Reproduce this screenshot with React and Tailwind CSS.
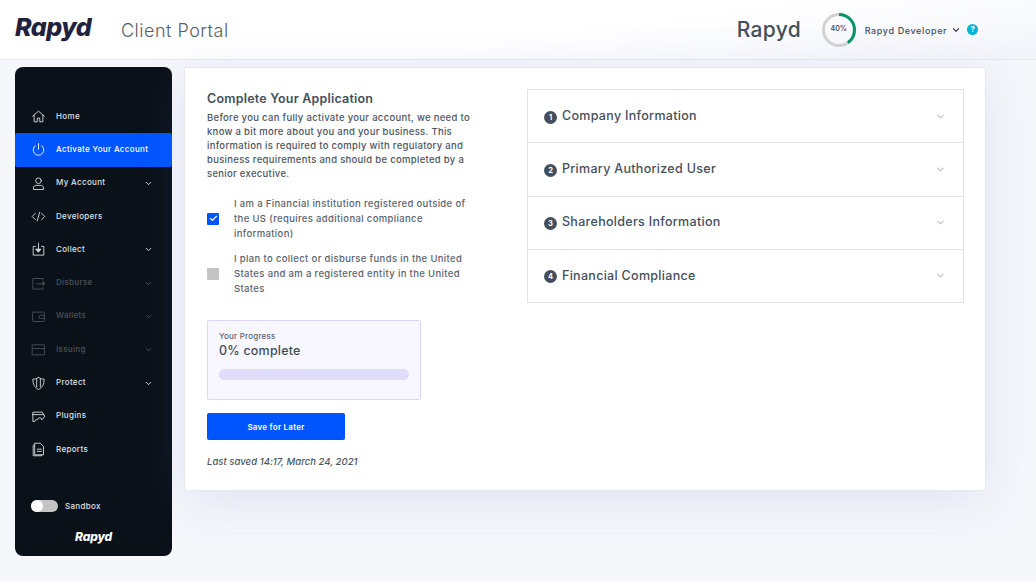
import React from "react";
import { ChevronDown, Check } from "lucide-react";

const S = ({ children, cls = "" }) => (
  <svg viewBox="0 0 24 24" width="15" height="15" fill="none" stroke="currentColor" strokeWidth="1.4" strokeLinecap="round" strokeLinejoin="round" className={cls}>{children}</svg>
);
const icons = {
  home: <S><path d="M2.500 11.500 12 3.500l9.500 8" /><path d="M5 10v10.500h5v-6h4v6h5V10" /></S>,
  power: <S><path d="M12 2.500v9" /><path d="M7 5.800a8.500 8.500 0 1 0 10 0" /></S>,
  user: <S><circle cx="12" cy="7.500" r="4.500" /><path d="M4 21v-2c0-2.500 2-4 4.500-4h7c2.500 0 4.500 1.500 4.500 4v2z" /></S>,
  code: <S><path d="m7 7-5 5 5 5" /><path d="m17 7 5 5-5 5" /><path d="m14 5-4 14" /></S>,
  collect: <S><path d="M7 7H3.500v14h17V7H17" /><path d="M12 2v12" /><path d="M8 11.500h8L12 16z" fill="currentColor" /></S>,
  disburse: <S><path d="M19 7V4H3v17h16v-3" /><path d="M9 12.500h10" /><path d="M19 10v5l3-2.500z" fill="currentColor" /></S>,
  wallet: <S><rect x="2.500" y="5" width="19" height="15" rx="1.500" /><path d="M21.500 10H15a2.500 2.500 0 0 0 0 5h6.500" /></S>,
  issuing: <S><rect x="2.500" y="4.500" width="19" height="16" /><path d="M2.500 10.500h19" /></S>,
  shield: <S><path d="M12 2.500c3 1.800 6 2.500 9 2.500 0 8-2.500 13.500-9 16.500C5.500 18.500 3 13 3 5c3 0 6-.7 9-2.500z" /><path d="M9 5v12M15 5v12" /></S>,
  plugin: <S><path d="M3 9V5h15l4 6.500-4 5.500h-1a3 3 0 0 0-6 0H9a3 3 0 0 0-3 3H3V9z" /><path d="M3 9h17" /></S>,
  reports: <S><path d="M5 5H3.500v17H17v-1.500" /><path d="M6.500 2H15l5 5v13.500H6.500z" /><path d="M10 11.500h6.500M10 15h6.500" /></S>,
};
const nav = [
  ["Home", "home", 0, 0, 0],
  ["Activate Your Account", "power", 0, 1, 0],
  ["My Account", "user", 1, 0, 0],
  ["Developers", "code", 0, 0, 0],
  ["Collect", "collect", 1, 0, 0],
  ["Disburse", "disburse", 1, 0, 1],
  ["Wallets", "wallet", 1, 0, 1],
  ["Issuing", "issuing", 1, 0, 1],
  ["Protect", "shield", 1, 0, 0],
  ["Plugins", "plugin", 0, 0, 0],
  ["Reports", "reports", 0, 0, 0],
];
const steps = ["Company Information", "Primary Authorized User", "Shareholders Information", "Financial Compliance"];

export default function App() {
  return (
    <div className="w-[1036px] h-[581px] overflow-hidden bg-[#f6f7fb] text-[#454f5b] font-['Inter','Liberation_Sans',sans-serif]">
      <header className="h-[60px] flex items-center border-b border-[#e6e8ef] bg-[linear-gradient(172deg,#ffffff_55%,#f3f4fa_100%)]">
        <span className="ml-[15px] w-[106px] -mt-[3px] text-[25px] font-extrabold italic tracking-[-0.5px] text-[#22223f]">Rapyd</span>
        <span className="mt-[2px] text-[18px] font-light tracking-[0.5px] text-[#56606d]">Client Portal</span>
        <span className="ml-[508px] w-[84px] text-[21px] font-medium tracking-[0.35px] text-[#454f5b]">Rapyd</span>
        <div className="relative w-[36px] h-[36px] flex items-center justify-center">
          <svg viewBox="0 0 36 36" width="36" height="36" className="absolute inset-0 -rotate-90">
            <circle cx="18" cy="18" r="15.500" fill="none" stroke="#d2d2d2" strokeWidth="3" />
            <circle cx="18" cy="18" r="15.500" fill="none" stroke="#069668" strokeWidth="3" strokeDasharray="39 97.400" />
          </svg>
          <span className="text-[7px] font-semibold">40%</span>
        </div>
        <span className="ml-[8px] mt-[2px] text-[9px] font-medium tracking-[0.62px] whitespace-nowrap">Rapyd Developer</span>
        <ChevronDown size={10} strokeWidth={3} className="ml-[4px]" />
        <span className="ml-[6px] w-[11px] h-[11px] rounded-full bg-[#08b4d6] text-white text-[8px] font-bold leading-[11px] text-center">?</span>
      </header>

      <main className="flex gap-[12px] pl-[15px] pt-[7px]">
        <aside className="w-[157px] h-[489px] rounded-lg bg-[#0a1119] flex flex-col pt-[33px] text-white">
          {nav.map(([label, icon, chev, active, dim]) => (
            <div key={label} className={`h-[33.3px] flex items-center pl-[16px] pr-[19px] ${active ? "bg-[#0055ff] rounded-[2px] text-white" : dim ? "text-[#4a5159]" : "text-[#dfe1e4]"}`}>
              <span className="w-[25px] flex">{icons[icon]}</span>
              <span className="flex-1 mb-[2px] text-[8px] font-medium tracking-[0.33px] whitespace-nowrap">{label}</span>
              {chev ? <ChevronDown size={9} strokeWidth={2.500} /> : null}
            </div>
          ))}
          <div className="mt-[34px] ml-[16px] flex items-center">
            <span className="relative w-[27px] h-[12px] rounded-full bg-[#c4c4c4]">
              <span className="absolute left-0 top-0 w-[12px] h-[12px] rounded-full bg-white" />
            </span>
            <span className="ml-[7px] text-[8px] font-medium tracking-[0.33px] text-[#dfe1e4]">Sandbox</span>
          </div>
          <div className="mt-[17px] text-center text-[12px] font-extrabold italic tracking-[-0.2px] leading-[16px]">Rapyd</div>
        </aside>

        <section className="w-[802px] h-[424px] rounded-[2px] bg-white border border-[#e6e7ef] shadow-[0_10px_50px_rgba(120,125,200,0.16)] flex pl-[22px] pt-[21px]">
          <div className="w-[320px]">
            <h1 className="text-[12.500px] leading-[20px] font-semibold tracking-[0.2px]">Complete Your Application</h1>
            <p className="w-[270px] mt-[2px] text-[9.500px] leading-[14px] font-medium tracking-[0.3px] text-[#4c5662]">
              Before you can fully activate your account, we need to know a bit more about you and your business. This information is required to comply with regulatory and business requirements and should be completed by a senior executive.
            </p>
            <div className="mt-[15px] flex items-center">
              <span className="w-[12px] h-[12px] rounded-[1px] bg-[#0055ff] flex items-center justify-center text-white"><Check size={9} strokeWidth={3} /></span>
              <span className="ml-[15px] w-[240px] text-[9.500px] leading-[15px] font-medium tracking-[0.35px] text-[#5a636e]">I am a Financial institution registered outside of the US (requires additional compliance information)</span>
            </div>
            <div className="mt-[10px] flex items-center">
              <span className="w-[12px] h-[12px] rounded-[1px] bg-[#c4c4c4]" />
              <span className="ml-[15px] w-[240px] text-[9.500px] leading-[15px] font-medium tracking-[0.35px] text-[#5a636e]">I plan to collect or disburse funds in the United States and am a registered entity in the United States</span>
            </div>
            <div className="mt-[24px] w-[214px] h-[80px] rounded-[2px] border border-[#dcd6fb] bg-[#f8f6fe] px-[11px] pt-[10px]">
              <div className="text-[8px] leading-[11px] font-medium tracking-[0.2px] text-[#5a636e]">Your Progress</div>
              <div className="text-[12.500px] leading-[17px] font-medium tracking-[0.2px]">0% complete</div>
              <div className="mt-[10px] h-[11px] rounded-full bg-[#dfddfa]" />
            </div>
            <button className="mt-[13px] block w-[138px] h-[27px] rounded-[2px] bg-[#0055ff] text-white text-[8px] font-semibold tracking-[0.25px]">Save for Later</button>
            <div className="mt-[15px] text-[9.500px] leading-[14px] italic font-medium tracking-[0.04px] text-[#4c5662]">Last saved 14:17, March 24, 2021</div>
          </div>
          <div className="w-[437px] h-[214px] border border-[#e2e2e2] flex flex-col">
            {steps.map((s, i) => (
              <div key={s} className={`flex-1 flex items-center pl-[16px] pr-[17px] ${i < 3 ? "border-b border-[#e2e2e2]" : ""}`}>
                <span className="mt-[2px] w-[13px] h-[13px] rounded-full bg-[#454f5b] text-white text-[7.500px] font-bold leading-[13px] text-center">{i + 1}</span>
                <span className="ml-[5px] flex-1 text-[12.500px] font-medium tracking-[0.3px]">{s}</span>
                <ChevronDown size={11} strokeWidth={2.200} className="text-[#bdbdbd]" />
              </div>
            ))}
          </div>
        </section>
      </main>
    </div>
  );
}
